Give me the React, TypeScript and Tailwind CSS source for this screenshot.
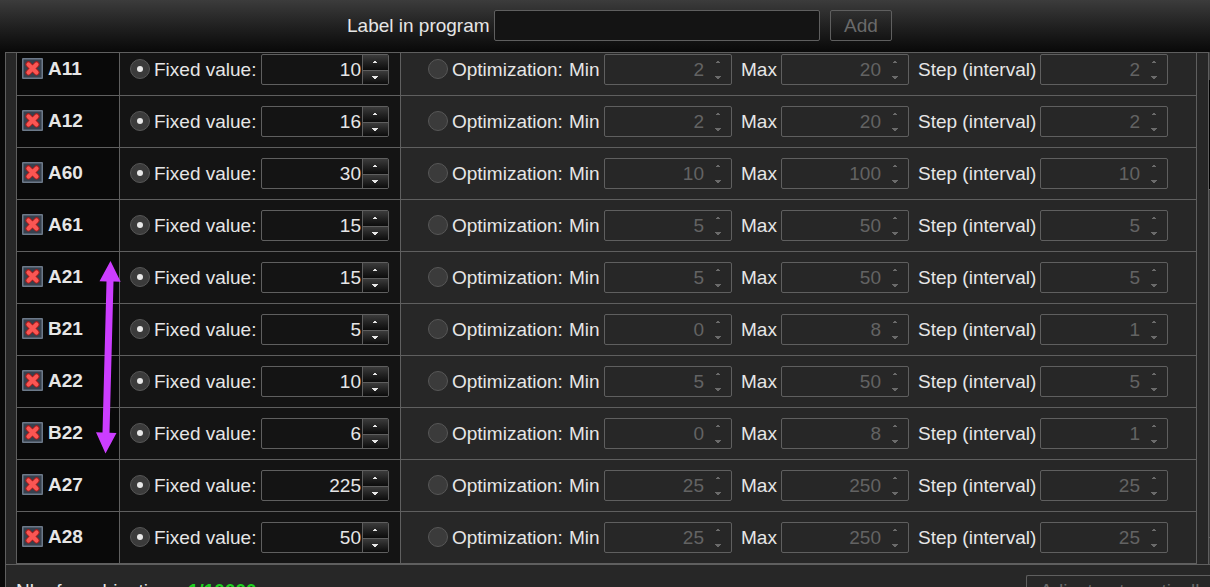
import { useState } from "react";

type Range = { min: number; max: number; step: number };
type Parameter = { name: string; value: number; range: Range };

const initialParameters: Parameter[] = [
  { name: "A11", value: 10, range: { min: 2, max: 20, step: 2 } },
  { name: "A12", value: 16, range: { min: 2, max: 20, step: 2 } },
  { name: "A60", value: 30, range: { min: 10, max: 100, step: 10 } },
  { name: "A61", value: 15, range: { min: 5, max: 50, step: 5 } },
  { name: "A21", value: 15, range: { min: 5, max: 50, step: 5 } },
  { name: "B21", value: 5, range: { min: 0, max: 8, step: 1 } },
  { name: "A22", value: 10, range: { min: 5, max: 50, step: 5 } },
  { name: "B22", value: 6, range: { min: 0, max: 8, step: 1 } },
  { name: "A27", value: 225, range: { min: 25, max: 250, step: 25 } },
  { name: "A28", value: 50, range: { min: 25, max: 250, step: 25 } },
];

function RemoveIcon() {
  return (
    <svg viewBox="0 0 21 21" className="size-[21px]" aria-hidden="true">
      <rect x="0" y="0" width="21" height="21" rx="1" fill="#6c7989" />
      <rect x="1.5" y="1.5" width="18" height="18" fill="#36414e" />
      <path d="M6.4 6.3l8.2 8.2M14.6 6.3l-8.2 8.2" stroke="#a31d1d" strokeWidth="6" strokeLinecap="round" />
      <path d="M6.5 6.4l8 8M14.5 6.4l-8 8" stroke="#fb5653" strokeWidth="4.2" strokeLinecap="round" />
    </svg>
  );
}

type SpinBoxProps = {
  id: string;
  value: number;
  disabled?: boolean;
  onChange: (value: number) => void;
};

function SpinBox({ id, value, disabled = false, onChange }: SpinBoxProps) {
  const tone = disabled
    ? "border-transparent text-[#6a6a6a]"
    : "border-[#5f5f5f] text-[#e6e6e6]";
  const face = disabled ? "" : "bg-linear-to-b from-[#3c3c3c] to-[#0c0c0c]";
  return (
    <div
      className={`flex h-[31px] w-32 shrink-0 overflow-hidden rounded-xs border border-[#5f5f5f] ${
        disabled ? "bg-[#272727]" : "bg-[#141414]"
      }`}
    >
      <input
        id={id}
        type="text"
        inputMode="numeric"
        value={value}
        disabled={disabled}
        onChange={(e) => onChange(Number(e.target.value) || 0)}
        className="min-w-0 flex-1 bg-transparent pr-px text-right text-[#e6e6e6] outline-none disabled:text-[#636363]"
      />
      <div className={`flex w-[26px] shrink-0 flex-col border-l ${tone}`}>
        <button
          type="button"
          aria-label="Increase"
          disabled={disabled}
          onClick={() => onChange(value + 1)}
          className={`h-4 border-b ${disabled ? "border-transparent" : "border-[#5f5f5f]"} ${face}`}
        >
          <svg viewBox="0 0 25 15" className="block h-[15px] w-[25px]" fill="currentColor" shapeRendering="crispEdges">
            <path d="M11 6h2v1h1v1h-4v-1h1z" />
          </svg>
        </button>
        <button
          type="button"
          aria-label="Decrease"
          disabled={disabled}
          onClick={() => onChange(value - 1)}
          className={`flex-1 ${face}`}
        >
          <svg viewBox="0 0 25 13" className="block h-[13px] w-[25px]" fill="currentColor" shapeRendering="crispEdges">
            <path d="M9 5h6v1h-1v1h-1v1h-2v-1h-1v-1h-1z" />
          </svg>
        </button>
      </div>
    </div>
  );
}

const radioClass =
  "mb-px grid size-5 shrink-0 appearance-none place-content-center rounded-full border border-[#575757] bg-[#3b3b3b] checked:before:size-1.5 checked:before:rounded-full checked:before:bg-[#e8e8e8]";

function ParameterRow({ parameter, onRemove }: { parameter: Parameter; onRemove: () => void }) {
  const { name } = parameter;
  const [mode, setMode] = useState<"fixed" | "optimize">("fixed");
  const [value, setValue] = useState(parameter.value);
  const [range, setRange] = useState(parameter.range);
  const fixed = mode === "fixed";

  return (
    <tr className="h-[52px]">
      <th scope="row" className="border-r border-b border-l border-[#5f5f5f] bg-[#090909] p-0 pl-[5px] text-left">
        <div className="flex items-center gap-[5px] pb-0.5">
          <button type="button" aria-label={`Remove ${name}`} onClick={onRemove}>
            <RemoveIcon />
          </button>
          <span>{name}</span>
        </div>
      </th>
      <td className="border-r border-b border-[#5f5f5f] bg-[#141414] p-0 pl-2.5">
        <div className="flex items-center">
          <input
            type="radio"
            id={`${name}-fixed`}
            name={`${name}-mode`}
            checked={fixed}
            onChange={() => setMode("fixed")}
            className={radioClass}
          />
          <label htmlFor={`${name}-fixed`} className="w-[111px] shrink-0 pl-1 whitespace-nowrap">
            Fixed value:
          </label>
          <SpinBox id={`${name}-value`} value={value} disabled={!fixed} onChange={setValue} />
        </div>
      </td>
      <td className="border-r border-b border-[#5f5f5f] p-0 pl-[27px]">
        <div className="flex items-center whitespace-nowrap">
          <input
            type="radio"
            id={`${name}-optimize`}
            name={`${name}-mode`}
            checked={!fixed}
            onChange={() => setMode("optimize")}
            className={radioClass}
          />
          <label htmlFor={`${name}-optimize`} className="w-[121px] shrink-0 pl-1">
            Optimization:
          </label>
          <label htmlFor={`${name}-min`} className="w-[35px] shrink-0">
            Min
          </label>
          <SpinBox
            id={`${name}-min`}
            value={range.min}
            disabled={fixed}
            onChange={(min) => setRange({ ...range, min })}
          />
          <label htmlFor={`${name}-max`} className="w-[49px] shrink-0 pl-[9px]">
            Max
          </label>
          <SpinBox
            id={`${name}-max`}
            value={range.max}
            disabled={fixed}
            onChange={(max) => setRange({ ...range, max })}
          />
          <label htmlFor={`${name}-step`} className="w-[131px] shrink-0 pl-[9px]">
            Step (interval)
          </label>
          <SpinBox
            id={`${name}-step`}
            value={range.step}
            disabled={fixed}
            onChange={(step) => setRange({ ...range, step })}
          />
        </div>
      </td>
    </tr>
  );
}

function RangeArrow() {
  return (
    <svg
      viewBox="0 0 26 194"
      className="pointer-events-none absolute top-[207px] left-[89px] h-[194px] w-[26px]"
      fill="#cc3dff"
      aria-hidden="true"
    >
      <path d="M15.5 1L25.7 21.7L18.5 21.6L14.5 172.8L21.5 173L10.5 193.5L1 172.3L7.5 172.5L11.5 21.4L4.5 21.3Z" />
    </svg>
  );
}

export default function App() {
  const [parameters, setParameters] = useState(initialParameters);
  const [label, setLabel] = useState("");

  return (
    <div className="flex h-screen flex-col overflow-hidden bg-[#090909] font-['Liberation_Sans',Arial,sans-serif] text-[19px] leading-6 text-[#e6e6e6]">
      <header className="flex h-[52px] shrink-0 items-start justify-center bg-linear-to-b from-[#3c3c3c] to-[#090909] pt-2.5 pl-[29px]">
        <form
          className="flex items-center"
          onSubmit={(e) => e.preventDefault()}
        >
          <label htmlFor="program-label" className="w-[147px] whitespace-nowrap">
            Label in program
          </label>
          <input
            id="program-label"
            type="text"
            value={label}
            onChange={(e) => setLabel(e.target.value)}
            className="h-[31px] w-[326px] rounded-xs border border-[#5f5f5f] bg-[#141414] px-1 outline-none"
          />
          <button
            type="submit"
            disabled={label === ""}
            className="ml-2.5 h-[31px] w-[62px] rounded-xs border border-[#5f5f5f] disabled:text-[#6a6a6a]"
          >
            Add
          </button>
        </form>
      </header>

      <main className="ml-[5px] flex min-h-0 flex-1 flex-col border-l border-[#5f5f5f] bg-[#272727]">
        <div className="flex shrink-0">
          <div className="relative flex-1 overflow-hidden border-t border-[#5f5f5f] pr-[11px] pl-2.5">
            <table className="-mt-[9px] w-full table-fixed border-separate border-spacing-0">
              <colgroup>
                <col className="w-[104px]" />
                <col className="w-[281px]" />
                <col />
              </colgroup>
              <tbody>
                {parameters.map((parameter) => (
                  <ParameterRow
                    key={parameter.name}
                    parameter={parameter}
                    onRemove={() => setParameters(parameters.filter((p) => p !== parameter))}
                  />
                ))}
              </tbody>
            </table>
            <RangeArrow />
          </div>
          <div className="flex w-0.5 flex-col border-l border-[#5f5f5f]" aria-hidden="true">
            <div className="h-7 bg-[#3c3c3c]" />
            <div className="h-[109px] bg-black" />
            <div className="flex-1 border-y border-[#5f5f5f] bg-[#3c3c3c]" />
            <div className="h-[26px] bg-[#3c3c3c]" />
          </div>
        </div>

        <footer className="flex shrink-0 items-center justify-between border-t border-[#5f5f5f] pt-2.5 pl-2.5">
          <p className="flex gap-1 whitespace-nowrap">
            <span>Nb of combinations:</span>
            <strong className="text-[#1fd11f]">1/10000</strong>
          </p>
          <button
            type="button"
            disabled
            className="h-[31px] w-[184px] rounded-l-xs border border-r-0 border-[#5f5f5f] pl-[13px] text-left whitespace-nowrap text-[#6a6a6a]"
          >
            Adjust automatically
          </button>
        </footer>
      </main>
    </div>
  );
}
